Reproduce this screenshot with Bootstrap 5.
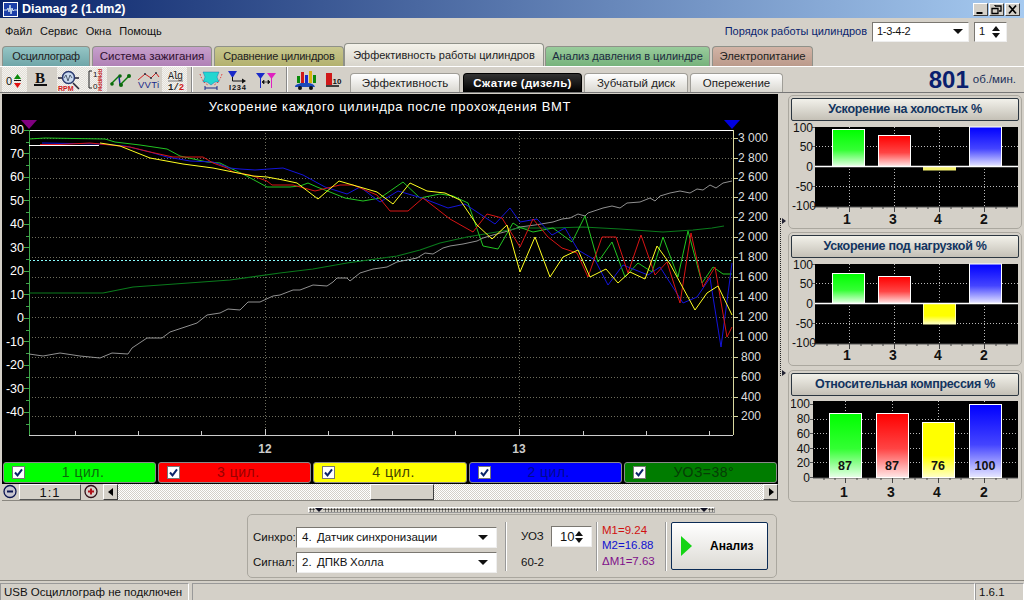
<!DOCTYPE html>
<html lang="ru"><head><meta charset="utf-8"><title>Diamag 2</title>
<link href="https://cdn.jsdelivr.net/npm/bootstrap@5.3.0/dist/css/bootstrap.min.css" rel="stylesheet">
<style>
:root{--w:#d4d0c8;--navy:#0a1f6e}
html,body{margin:0;width:1024px;height:600px;overflow:hidden}
body{background:var(--w);font:11px/1.2 "Liberation Sans",Arial,sans-serif;color:#111;white-space:nowrap}
.app{width:1024px;height:600px}
.ttl{height:18px;background:linear-gradient(90deg,#0a246a,#a6caf0);color:#fff;font-weight:700;font-size:12.5px;padding-left:3px}
.wbtn{width:15px;height:13px;background:var(--w);border:1px solid;border-color:#fff #404040 #404040 #fff;margin-left:1px;display:block}
.mrow{height:25px;padding:3px 17px 1px 5px}
.mitem{margin-right:8px}
.ordr{color:var(--navy);margin-right:5px}
.combo{background:#fff;border:1px solid #8d8a84;border-color:#7a7771 #eee #eee #7a7771;padding:0 5px 0 4px;color:#111}
.combo.c1{width:97px;height:20px;letter-spacing:-.3px}
.tri{width:0;height:0;border-left:5px solid transparent;border-right:5px solid transparent;border-top:5px solid #111}
.spin{width:33px;height:20px;margin-left:5px}
.spn{width:10px;gap:2px}
.tup{width:0;height:0;border-left:4px solid transparent;border-right:4px solid transparent;border-bottom:5px solid #111}
.tdn{width:0;height:0;border-left:4px solid transparent;border-right:4px solid transparent;border-top:5px solid #111}
.trow{height:23px;padding-left:2px;align-items:flex-end;font-size:11px}
.tb{height:20px;border:1px solid #8f9189;border-bottom:0;border-radius:4px 4px 0 0;text-align:center;line-height:19px;color:#222;margin-right:2px;flex:none}
.t1{width:88px;background:linear-gradient(#95c5c5,#6fa6a8);letter-spacing:-.3px}
.t2{width:120px;background:linear-gradient(#c7a0cc,#b081b6);color:#301030;font-size:11.5px}
.t3{width:130px;background:linear-gradient(#c8c78e,#b3b16e);margin-right:0;letter-spacing:-.2px}
.t4{width:200px;height:23px;background:linear-gradient(#f4f2ea,#d8d5cc);line-height:22px;margin-right:1px}
.t5{width:165px;background:linear-gradient(#99cc9c,#77b37c);color:#1c2a40}
.t6{width:101px;background:linear-gradient(#d2b4a6,#bb9a8b);font-size:11.3px}
.tool{height:27px;border-top:1px solid #fff;border-bottom:1px solid #777;padding-left:2px}
.ic{display:block;flex:none}
.ic.on{background:repeating-conic-gradient(#f4f2ee 0 25%,#e2dfd8 0 50%) 0 0/2px 2px}
.vs{width:2px;height:25px;border-left:1px solid #888;border-right:1px solid #fff;flex:none}
.stabs{margin-left:6px;padding-top:6px;align-self:stretch;align-items:flex-end;font-size:11.5px}
.st{height:19px;border:1px solid #a09e98;border-bottom:0;border-radius:4px 4px 0 0;background:linear-gradient(#fff,#d9d7d0);text-align:center;line-height:19px;color:#222;margin-right:2px}
.st.s1{width:110px;margin-right:3px}.st.s2{width:119px;background:linear-gradient(#333,#000);color:#fff;font-weight:700;border-color:#000;letter-spacing:.3px}.st.s3{width:104px}.st.s4{width:93px}
.rpmv{margin-left:auto;color:var(--navy);padding-right:8px;padding-top:1px}
.rpmv b{font-size:24px;line-height:24px}
.rpmv span{margin-left:4px;color:#20305a;font-size:11.5px}
.mainr{height:487px;padding-left:2px}
.lcol{width:776px}
.plot{display:block;background:#000;margin-top:1px}
.plot text,.bars text{font-family:"Liberation Sans",sans-serif}
.legs{height:23px;background:#000;padding:1px;gap:2px}
.lg{height:21px;border-radius:3px;border:1px solid #8a8a8a;padding-left:8px;flex:1 1 0;font-size:14px;letter-spacing:.5px}
.chk{width:13px;height:13px;background:#fff;border:1px solid #777;display:block;flex:none}
.chk svg{display:block}
.lt{flex:1;text-align:center;padding-right:14px}
.lgg{background:#0f0;color:#0a6d0a}.lgr{background:#f00;color:#900}.lgy{background:#ff0;color:#444400}.lgb{background:#00f;color:#000a90}.lgd{background:#007c00;color:#063d06}
.scr{height:17px;border-bottom:1px solid #8a8780}
.zb{width:16px;flex:none}
.zlab{width:62px;margin:0 2px 0 1px;border:1px solid;border-color:#fff #555 #555 #fff;text-align:center;font-size:13px;letter-spacing:1px;line-height:16px;flex:none}
.sbtn{width:15px;border:1px solid;border-color:#fff #404040 #404040 #fff;flex:none}
.trk{background:repeating-conic-gradient(#fff 0 25%,#d4d0c8 0 50%) 0 0/2px 2px}
.thumb{width:64px;margin-left:252px;background:var(--w);border:1px solid;border-color:#fff #404040 #404040 #fff}
.hsp{height:6px;width:407px;margin:6px 0 1px 306px;padding:0 6px;border:1px solid;border-color:#fff #999 #999 #fff;background:radial-gradient(#333 45%,transparent 50%) 0 0/3px 3px}
.hsp i{width:0;height:0;border-left:4px solid transparent;border-right:4px solid transparent;border-top:4px solid #112;background:var(--w)}
.gb{border:1px solid #aaa79f;border-radius:5px;background:var(--w)}
.gb1{width:530px;height:64px;margin-left:245px;padding:0 0 0 5px}
.lbl{width:43px;font-size:11.5px}
.combo.c2{width:201px;height:21px;font-size:11.5px;padding-left:5px;padding-right:8px;word-spacing:-.5px}
.sep{width:2px;height:49px;border-left:1px solid #999;border-right:1px solid #fff;flex:none}
.uoz{width:85px;padding-left:14px;gap:9px;font-size:11.5px}
.spin2{width:41px;height:21px;font-size:13px;padding-left:8px;padding-right:8px}
.vals{width:67px;padding-left:4px;font-size:11.5px;line-height:15.5px}
.anl{width:97px;height:48px;margin-left:4px;background:linear-gradient(#fff,#dcdad4);border:1px solid #0b2b55;border-radius:2px;padding:0 0 0 9px;font-weight:700;font-size:12px;color:#000}
.play{width:0;height:0;border-left:11px solid #14d414;border-top:10px solid transparent;border-bottom:10px solid transparent;margin-right:18px}
.vsp{width:6px;margin:125px 2px 0 2px;height:158px;border-left:1px dotted #222;position:relative;flex:none}
.ar{display:block;width:0;height:0;border-left:4px solid #223;border-top:3px solid transparent;border-bottom:3px solid transparent;margin-left:1px}
.rcol{width:234px;padding-top:2px;gap:2px}
.gp{padding:2px 2px 0;width:234px}
.gh{height:23px;background:linear-gradient(#f2f1ea,#c4c0b6);border:1px solid #2b3640;border-radius:2px;text-align:center;color:#12345f;font-weight:700;line-height:21px;font-size:12.5px;letter-spacing:-.3px}
.g1{height:134px}.g2{height:134px;margin-top:1px}.g3{height:132px;margin-top:2px}
.bars{display:block}
.stat{height:20px;border-top:1px solid #8a8780;padding-top:2px}
.sp{border:1px solid;border-color:#999 #fff #fff #999;height:18px;line-height:16px;padding-left:3px;font-size:11.5px;flex:none}
.sp1{width:189px}.sp2{width:783px;margin-left:3px}.sp3{width:49px}
.cr{color:#d01010}.cb{color:#1010d0}.cp{color:#80108a}
</style></head><body>
<svg width="0" height="0" class="position-absolute"><defs>
<linearGradient id="gg" x1="0" y1="0" x2="0" y2="1"><stop offset="0" stop-color="#0f0"/><stop offset=".55" stop-color="#3f3"/><stop offset="1" stop-color="#e8ffe8"/></linearGradient>
<linearGradient id="gr" x1="0" y1="0" x2="0" y2="1"><stop offset="0" stop-color="#f00"/><stop offset=".55" stop-color="#f44"/><stop offset="1" stop-color="#ffe8e8"/></linearGradient>
<linearGradient id="gy" x1="0" y1="0" x2="0" y2="1"><stop offset="0" stop-color="#ff0"/><stop offset=".6" stop-color="#ff0"/><stop offset="1" stop-color="#ffffc8"/></linearGradient>
<linearGradient id="gb" x1="0" y1="0" x2="0" y2="1"><stop offset="0" stop-color="#00f"/><stop offset=".55" stop-color="#44f"/><stop offset="1" stop-color="#e8e8ff"/></linearGradient>
<symbol id="ck" viewBox="0 0 11 11"><path d="M2 5.500l2.500 2.800 4.500-6" fill="none" stroke="#0a246a" stroke-width="2"/></symbol>
</defs></svg>
<div class="app d-flex flex-column">
<div class="ttl d-flex align-items-center">
<svg width="15" height="15" viewBox="0 0 15 15" class="me-1"><rect x=".5" y=".5" width="14" height="14" fill="#1c3fa8" stroke="#fff"/><path d="M1 8h3l1-2 1 4 1-7 1 9 1-6 1 3 1-1h3" fill="none" stroke="#cde"/></svg>
<span>Diamag 2 (1.dm2)</span>
<div class="ms-auto d-flex me-1">
<svg class="wbtn" viewBox="0 0 13 11"><path d="M2.500 9h6" stroke="#000" stroke-width="2"/></svg>
<svg class="wbtn" viewBox="0 0 13 11"><path d="M5 2h6v5H9M2 4.500h6v5H2zM5 1v1" fill="none" stroke="#000" stroke-width="1.300"/></svg>
<svg class="wbtn" viewBox="0 0 13 11"><path d="M3 1.500l7 8M10 1.500l-7 8" stroke="#000" stroke-width="1.800"/></svg></div>
</div>
<div class="mrow d-flex align-items-center">
<span class="mitem">Файл</span><span class="mitem">Сервис</span><span class="mitem">Окна</span><span class="mitem">Помощь</span>
<span class="ordr ms-auto">Порядок работы цилиндров</span>
<div class="combo c1 d-flex align-items-center justify-content-between">1-3-4-2<i class="tri"></i></div>
<div class="combo spin d-flex align-items-center justify-content-between">1<div class="spn d-flex flex-column align-items-center"><i class="tup"></i><i class="tdn"></i></div></div>
</div>
<div class="trow d-flex">
<div class="tb t1">Осциллограф</div><div class="tb t2">Система зажигания</div><div class="tb t3">Сравнение цилиндров</div><div class="tb t4">Эффективность работы цилиндров</div><div class="tb t5">Анализ давления в цилиндре</div><div class="tb t6">Электропитание</div>
</div>
<div class="tool d-flex align-items-start">
<svg class="ic on" width="25" height="25" viewBox="0 0 25 25"><text x="4" y="18" font-size="11" font-family="Liberation Sans" fill="#111">0</text><path d="M15.500 7l-3.500 5h7z" fill="#0a8a0a"/><path d="M12 13.500h7" stroke="#111"/><path d="M15.500 21l-3.500-5h7z" fill="#e01010"/></svg>
<svg class="ic" width="30" height="25" viewBox="0 0 30 25"><text x="13" y="15.500" font-size="15" font-weight="700" font-family="Liberation Serif" text-anchor="middle" fill="#111">B</text><rect x="7" y="17" width="13" height="2" fill="#111"/></svg>
<svg class="ic on" width="25" height="25" viewBox="0 0 25 25"><path d="M1 11h6M16 11h6M16 16l6 6" stroke="#223" stroke-width="1.500"/><circle cx="11.500" cy="10.500" r="6" fill="#c9d9ee" stroke="#2a3a70" stroke-width="1.500"/><path d="M7 11l2-3 2 6 2-6 2 3" fill="none" stroke="#345" stroke-width=".8"/><text x="1" y="24" font-size="7" font-weight="700" fill="#d01818" font-family="Liberation Sans">RPM</text></svg>
<svg class="ic on" width="25" height="25" viewBox="0 0 25 25"><path d="M10 4H7V21H10" fill="none" stroke="#222"/><text x="11" y="10" font-size="8" font-family="Liberation Sans" fill="#111">1</text><text x="11" y="22" font-size="8" font-family="Liberation Sans" fill="#111">0</text><text transform="translate(16 2) rotate(90)" font-size="5" font-weight="700" fill="#c21818" font-family="Liberation Sans">RPM</text><text transform="translate(16 13) rotate(90)" font-size="5" font-weight="700" fill="#c21818" font-family="Liberation Sans">RPM</text></svg>
<svg class="ic" width="27" height="25" viewBox="0 0 27 25"><path d="M4 17l8-8" stroke="#0a7a0a" stroke-width="1.500"/><path d="M12 9l1 9" stroke="#1a2a9a" stroke-width="1.500"/><path d="M13 18l9-9" stroke="#0a7a0a" stroke-width="1.500"/><circle cx="5" cy="17" r="1.800" fill="#0a6a0a"/><circle cx="13" cy="9" r="1.800" fill="#0a6a0a"/><circle cx="14" cy="18" r="2" fill="#0a6a0a"/><circle cx="22" cy="9" r="2" fill="#0a6a0a"/></svg>
<svg class="ic" width="28" height="25" viewBox="0 0 28 25"><path d="M4 13l7-6 6 4 5-5 3 4" fill="none" stroke="#d01c1c"/><circle cx="11" cy="7" r="1" fill="#234"/><circle cx="17" cy="11" r="1" fill="#234"/><circle cx="22" cy="6" r="1" fill="#234"/><text x="4" y="21" font-size="9.500" font-family="Liberation Sans" fill="#1a2a8a" textLength="21">VVTi</text></svg>
<svg class="ic on" width="25" height="25" viewBox="0 0 25 25"><text x="6" y="12" font-size="10" font-family="Liberation Mono" fill="#222" textLength="15">Alg</text><path d="M6 14h15" stroke="#777"/><text x="6" y="23" font-size="9" font-weight="700" font-family="Liberation Mono" fill="#222">1/<tspan fill="#d01818">2</tspan></text></svg>
<div class="vs mx-1"></div>
<svg class="ic" width="29" height="25" viewBox="0 0 29 25"><path d="M6 5h16l-2 5 2 5h-4l-4 3-4-3H6l2-5z" fill="#23d6d0" stroke="#15a" stroke-width=".4"/><path d="M3 7c2 6 4 9 8 11M25 7c-2 6-4 9-8 11" fill="none" stroke="#d22" stroke-width=".8" stroke-dasharray="1.500 1.500"/><path d="M8 21h12M8 19v4M20 19v4" stroke="#1a2a8a"/></svg>
<svg class="ic" width="26" height="25" viewBox="0 0 26 25"><path d="M2 4h9l-4.500 7z" fill="#1a2ac8"/><path d="M6.500 10v4h12" fill="none" stroke="#111"/><path d="M20 14l-4-2.500v5z" fill="#111"/><text x="3" y="23" font-size="7.500" font-weight="700" font-family="Liberation Sans" fill="#111" textLength="17">I234</text></svg>
<svg class="ic" width="30" height="25" viewBox="0 0 30 25"><path d="M4 6h9l-4.500 6z" fill="#1a2ac8"/><path d="M8.500 11v10" stroke="#1a2ac8"/><path d="M15 6h9l-4.500 6z" fill="#e020c0"/><path d="M19.500 11v10" stroke="#e020c0"/><path d="M10 15h8M10 15l2-2v4zM18 15l-2-2v4z" fill="#111" stroke="#111" stroke-width=".7"/></svg>
<div class="vs mx-1"></div>
<svg class="ic" width="28" height="25" viewBox="0 0 28 25"><rect x="5" y="9" width="3" height="7" fill="#0a8a0a"/><rect x="9" y="5" width="3" height="11" fill="#d01818"/><rect x="13" y="8" width="3" height="8" fill="#1a2ac8"/><rect x="17" y="4" width="3" height="12" fill="#d8b010"/><rect x="21" y="8" width="3" height="8" fill="#0a8a0a"/><path d="M3 20c0-3 4-3 6-4h7c3 0 6 1 7 4z" fill="#1a48b8"/><circle cx="8" cy="21" r="2" fill="#111"/><circle cx="19" cy="21" r="2" fill="#111"/></svg>
<svg class="ic" width="24" height="25" viewBox="0 0 24 25"><rect x="6" y="6" width="6" height="12" fill="#d01818"/><path d="M6 19h13" stroke="#111" stroke-width="1.500"/><text x="12.500" y="17" font-size="8" font-weight="700" font-family="Liberation Sans" fill="#111">10</text></svg>
<div class="stabs d-flex">
<div class="st s1">Эффективность</div><div class="st s2">Сжатие (дизель)</div><div class="st s3">Зубчатый диск</div><div class="st s4">Опережение</div>
</div>
<div class="rpmv d-flex align-items-center"><b>801</b><span>об./мин.</span></div>
</div>
<div class="mainr d-flex">
<div class="lcol d-flex flex-column">
<svg class="plot" width="776" height="367" viewBox="2 94 776 367">
<text x="390" y="111" fill="#fff" font-size="13" text-anchor="middle" letter-spacing=".65">Ускорение каждого цилиндра после прохождения ВМТ</text>
<path d="M29 138.500H733M29 158.500H733M29 178.500H733M29 197.500H733M29 217.500H733M29 237.500H733M29 257.500H733M29 277.500H733M29 297.500H733M29 317.500H733M29 337.500H733M29 357.500H733M29 377.500H733M29 397.500H733M29 416.500H733M265.500 130V435M519.500 130V435" stroke="#6e6e5e" stroke-dasharray="1 2" fill="none"/>
<path d="M29 260.500H733" stroke="#8ff" stroke-dasharray="2 2"/>
<path d="M29 130.500H733" stroke="#fff"/>
<path d="M29 435.500H733" stroke="#ccc"/>
<path d="M29.500 130V435M24 130.500h5M24 153.500h5M24 177.500h5M24 200.500h5M24 224.500h5M24 247.500h5M24 271.500h5M24 294.500h5M24 318.500h5M24 341.500h5M24 365.500h5M24 388.500h5M24 412.500h5M26 142.500h3M26 165.500h3M26 189.500h3M26 212.500h3M26 236.500h3M26 259.500h3M26 283.500h3M26 306.500h3M26 330.500h3M26 353.500h3M26 377.500h3M26 400.500h3M26 424.500h3" stroke="#3fa84a" fill="none"/>
<path d="M733.500 130V435M733 138.500h5M733 158.500h5M733 178.500h5M733 197.500h5M733 217.500h5M733 237.500h5M733 257.500h5M733 277.500h5M733 297.500h5M733 317.500h5M733 337.500h5M733 357.500h5M733 377.500h5M733 397.500h5M733 416.500h5" stroke="#d8d8a0" fill="none"/>
<path d="M75.500 431V435M138.500 431V435M201.500 431V435M265.500 429V435M328.500 431V435M392.500 431V435M455.500 431V435M519.500 429V435M583.500 431V435M646.500 431V435M709.500 431V435" stroke="#ccc"/>
<g fill="#fff" font-size="12.500" text-anchor="end"><text x="24" y="134">80</text><text x="24" y="157.500">70</text><text x="24" y="181">60</text><text x="24" y="204.500">50</text><text x="24" y="228">40</text><text x="24" y="251.500">30</text><text x="24" y="275">20</text><text x="24" y="298.500">10</text><text x="24" y="322">0</text><text x="24" y="345.500">-10</text><text x="24" y="369">-20</text><text x="24" y="392.500">-30</text><text x="24" y="416">-40</text></g>
<g fill="#ddd" font-size="12"><text x="738" y="142">3 000</text><text x="738" y="162">2 800</text><text x="738" y="181">2 600</text><text x="738" y="201">2 400</text><text x="738" y="221">2 200</text><text x="738" y="241">2 000</text><text x="738" y="261">1 800</text><text x="738" y="281">1 600</text><text x="738" y="301">1 400</text><text x="738" y="321">1 200</text><text x="738" y="341">1 000</text><text x="741" y="361">800</text><text x="741" y="381">600</text><text x="741" y="401">400</text><text x="741" y="420">200</text></g>
<g fill="#ccc" font-size="12" font-weight="700" text-anchor="middle"><text x="265" y="453">12</text><text x="519" y="453">13</text></g>
<path d="M21 120h16l-8 9z" fill="#800080"/><path d="M724 120h16l-8 9z" fill="#0000e0"/>
<g fill="none" stroke-width="1" stroke-linejoin="round">
<path stroke="#a0a0a0" stroke-width=".9" d="M29 354L43 356L60 353L80 356L100 358L112 353L128 354L132 348L147 338L162 338L170 332L197 323L207 315L220 313L228 309L240 310L248 302L260 302L273 296L280 295L293 290L300 290L313 285L327 286L333 282L337 278L347 278L350 281L360 273L373 269L387 267L397 262L417 258L425 253L433 254L443 248L450 246L463 244L477 241L483 238L493 235L508 231L520 227L535 225L553 222L562 219L570 218L578 214L585 216L588 213L603 208L612 206L620 208L627 203L640 202L650 198L655 201L660 196L670 193L680 191L690 193L697 189L703 190L710 185L716 188L723 183L732 181"/>
<path stroke="#0a7a1c" stroke-width="1.100" d="M29 293L103 293L133 287L230 280L280 273L313 269L347 263L397 256L420 250L440 243L467 237L520 228L553 228L583 227L620 229L663 232L693 230L712 228L724 226"/>
<path stroke="#fff" d="M29 145.500H99"/>
<path stroke="#22c422" d="M29 139L45 138L105 139L115 142L140 145L167 149L180 156L207 162L220 163L230 168L243 174L267 187L290 187L300 186L308 183L317 187L330 192L345 198L363 201L380 198L403 182L420 198L440 194L453 196L468 203L483 246L498 249L513 223L519 227L533 232L553 228L572 242L585 216L598 262L612 242L625 277L638 263L652 272L663 237L678 277L688 231L702 283L713 267L723 274L732 274"/>
<path stroke="#1414dc" d="M42 143L100 144L125 146L150 152L167 157L190 161L213 162L230 168L240 169L255 170L283 168L303 175L325 187L347 194L360 187L380 202L398 191L422 198L448 208L465 204L495 224L510 208L520 222L537 219L552 235L565 228L578 250L595 260L608 285L623 265L648 275L660 267L683 303L697 297L710 278L721 347L732 263"/>
<path stroke="#d81414" d="M40 144.500L60 144.500L90 143L130 147L150 152L173 157L193 157L203 157L213 163L227 168L233 172L250 175L267 181L272 185L293 185L315 191L340 185L353 185L377 195L390 211L408 211L423 198L450 219L473 232L487 214L502 218L520 247L533 219L548 237L562 248L577 253L588 277L602 237L616 237L628 273L641 235L655 275L667 262L680 303L691 233L703 287L715 267L727 337L732 327"/>
<path stroke="#ffff20" d="M100 143L120 146L150 158L183 164L213 168L233 172L253 176L267 177L283 180L297 183L318 199L339 181L377 192L393 204L410 183L427 191L445 193L460 200L477 225L492 239L507 225L520 272L535 237L550 277L563 257L578 250L590 277L606 269L618 283L630 272L645 279L657 246L670 264L695 310L707 293L718 286L732 315"/>
</g>
</svg>
<div class="legs d-flex">
<div class="lg lgg d-flex align-items-center"><span class="chk"><svg width="11" height="11"><use href="#ck"/></svg></span><span class="lt">1 цил.</span></div>
<div class="lg lgr d-flex align-items-center"><span class="chk"><svg width="11" height="11"><use href="#ck"/></svg></span><span class="lt">3 цил.</span></div>
<div class="lg lgy d-flex align-items-center"><span class="chk"><svg width="11" height="11"><use href="#ck"/></svg></span><span class="lt">4 цил.</span></div>
<div class="lg lgb d-flex align-items-center"><span class="chk"><svg width="11" height="11"><use href="#ck"/></svg></span><span class="lt">2 цил.</span></div>
<div class="lg lgd d-flex align-items-center"><span class="chk"><svg width="11" height="11"><use href="#ck"/></svg></span><span class="lt">УОЗ=38°</span></div>
</div>
<div class="scr d-flex">
<svg class="zb" height="16" viewBox="0 0 16 16"><circle cx="8" cy="7.500" r="6" fill="#c8c6d0" stroke="#0a1450" stroke-width="1.300"/><path d="M5 7.500h6" stroke="#0a1450" stroke-width="2"/></svg>
<div class="zlab">1:1</div>
<svg class="zb" height="16" viewBox="0 0 16 16"><circle cx="8" cy="7.500" r="6" fill="#d8d0cc" stroke="#301018" stroke-width="1.300"/><path d="M5 7.500h6M8 4.500v6" stroke="#b01018" stroke-width="2"/></svg>
<div class="sbtn ms-1 d-flex align-items-center justify-content-center"><svg width="6" height="8"><path d="M5 0v8L0 4z" fill="#000"/></svg></div>
<div class="trk flex-grow-1 d-flex"><div class="thumb"></div></div>
<div class="sbtn d-flex align-items-center justify-content-center"><svg width="6" height="8"><path d="M1 0v8l5-4z" fill="#000"/></svg></div>
</div>
<div class="hsp d-flex justify-content-between"><i></i><i></i></div>
<div class="gb gb1 d-flex align-items-center">
<div class="d-flex flex-column gap-1 pt-2">
<div class="d-flex align-items-center"><span class="lbl">Синхро:</span><div class="combo c2 d-flex align-items-center justify-content-between">4.&nbsp; Датчик синхронизации<i class="tri"></i></div></div>
<div class="d-flex align-items-center"><span class="lbl">Сигнал:</span><div class="combo c2 d-flex align-items-center justify-content-between">2.&nbsp; ДПКВ Холла<i class="tri"></i></div></div>
</div>
<div class="sep ms-2"></div>
<div class="uoz d-flex flex-column pt-2">
<div class="d-flex align-items-center justify-content-between"><span>УОЗ</span><div class="combo spin2 d-flex align-items-center justify-content-between">10<div class="spn d-flex flex-column align-items-center"><i class="tup"></i><i class="tdn"></i></div></div></div>
<div class="pb-1">60-2</div>
</div>
<div class="sep ms-1"></div>
<div class="vals d-flex flex-column"><span class="cr">M1=9.24</span><span class="cb">M2=16.88</span><span class="cp">ΔM1=7.63</span></div>
<div class="sep"></div>
<button class="btn anl d-flex align-items-center"><i class="play"></i>Анализ</button>
</div>
</div>
<div class="vsp"><i class="ar"></i><i class="ar position-absolute bottom-0"></i></div>
<div class="rcol d-flex flex-column">
<div class="gb gp g1"><div class="gh">Ускорение на холостых %</div>
<svg class="bars" width="230" height="106" viewBox="790 121 230 106">
<rect x="814" y="127" width="203" height="80" fill="#000"/>
<path d="M815 146.500H1017M815 186.500H1017M848.500 127V207M893.500 127V207M938.500 127V207M983.500 127V207" stroke="#bbb" stroke-dasharray="1 2"/>
<path d="M811 127.500h3M811 146.500h3M811 186.500h3M811 206.500h3M814 207h203" stroke="#555"/><path d="M848.500 207v5M893.500 207v5M938.500 207v5M983.500 207v5M826 207v2M837 207v2M860 207v2M871 207v2M882 207v2M905 207v2M916 207v2M927 207v2M950 207v2M961 207v2M972 207v2M995 207v2M1006 207v2" stroke="#444"/>
<rect x="831.500" y="129.500" width="32" height="37" fill="url(#gg)" stroke="#fff"/><rect x="877.500" y="135.500" width="32" height="31" fill="url(#gr)" stroke="#fff"/><rect x="922" y="167" width="33" height="3.500" fill="#f4f070"/><rect x="968.500" y="127" width="32" height="39.500" fill="url(#gb)" stroke="#fff"/>
<path d="M814 166.500H1017" stroke="#fff" stroke-width="1.300"/>
<g font-size="12" fill="#111" text-anchor="end"><text x="812" y="132">100</text><text x="812" y="151">50</text><text x="812" y="171">0</text><text x="812" y="191">-50</text><text x="815" y="210">-100</text></g>
<g font-size="14" font-weight="700" fill="#111" text-anchor="middle"><text x="846" y="224">1</text><text x="892" y="224">3</text><text x="937" y="224">4</text><text x="983" y="224">2</text></g>
</svg></div>
<div class="gb gp g2"><div class="gh">Ускорение под нагрузкой %</div>
<svg class="bars" width="230" height="106" viewBox="790 257 230 106">
<rect x="814" y="263" width="203" height="80" fill="#000"/>
<path d="M815 282.500H1017M815 322.500H1017M848.500 263V343M893.500 263V343M938.500 263V343M983.500 263V343" stroke="#bbb" stroke-dasharray="1 2"/>
<path d="M811 263.500h3M811 282.500h3M811 322.500h3M811 342.500h3M814 343h203" stroke="#555"/><path d="M848.500 343v5M893.500 343v5M938.500 343v5M983.500 343v5M826 343v2M837 343v2M860 343v2M871 343v2M882 343v2M905 343v2M916 343v2M927 343v2M950 343v2M961 343v2M972 343v2M995 343v2M1006 343v2" stroke="#444"/>
<rect x="831.500" y="272.500" width="32" height="30" fill="url(#gg)" stroke="#fff"/><rect x="877.500" y="275.500" width="32" height="27" fill="url(#gr)" stroke="#fff"/><rect x="922.500" y="302.500" width="32" height="20.500" fill="url(#gy)" stroke="#ffffb0"/><rect x="968.500" y="263" width="32" height="39.500" fill="url(#gb)" stroke="#fff"/>
<path d="M814 302.500H1017" stroke="#fff" stroke-width="1.300"/>
<g font-size="12" fill="#111" text-anchor="end"><text x="812" y="268">100</text><text x="812" y="287">50</text><text x="812" y="307">0</text><text x="812" y="327">-50</text><text x="815" y="346">-100</text></g>
<g font-size="14" font-weight="700" fill="#111" text-anchor="middle"><text x="846" y="359">1</text><text x="892" y="359">3</text><text x="937" y="359">4</text><text x="983" y="359">2</text></g>
</svg></div>
<div class="gb gp g3"><div class="gh">Относительная компрессия %</div>
<svg class="bars" width="230" height="104" viewBox="790 394 230 104">
<rect x="812" y="399" width="205" height="77" fill="#000"/>
<path d="M813 417.500H1017M813 431.500H1017M813 446.500H1017M813 460.500H1017M844.500 399V476M891.500 399V476M937.500 399V476M983.500 399V476" stroke="#bbb" stroke-dasharray="1 2"/>
<path d="M809 402.500h3M809 417.500h3M809 431.500h3M809 446.500h3M809 460.500h3M809 475.500h3M812 476h205" stroke="#555"/><path d="M844.500 476v5M891.500 476v5M937.500 476v5M983.500 476v5M823 476v2M834 476v2M856 476v2M867 476v2M880 476v2M903 476v2M914 476v2M926 476v2M949 476v2M960 476v2M972 476v2M995 476v2M1006 476v2" stroke="#444"/>
<rect x="828.500" y="411.500" width="32" height="64" fill="url(#gg)" stroke="#fff"/><rect x="875.500" y="411.500" width="32" height="64" fill="url(#gr)" stroke="#fff"/><rect x="921.500" y="420.500" width="32" height="55" fill="url(#gy)" stroke="#fff"/><rect x="968.500" y="402.500" width="32" height="73" fill="url(#gb)" stroke="#fff"/>
<g font-size="12" fill="#111" text-anchor="end"><text x="809" y="406">100</text><text x="809" y="421">80</text><text x="809" y="436">60</text><text x="809" y="451">40</text><text x="809" y="465">20</text><text x="809" y="480">0</text></g>
<g font-size="12.500" font-weight="700" fill="#111" text-anchor="middle"><text x="844" y="468">87</text><text x="891" y="468">87</text><text x="937" y="468">76</text><text x="984" y="468">100</text></g>
<g font-size="14" font-weight="700" fill="#111" text-anchor="middle"><text x="843" y="495">1</text><text x="890" y="495">3</text><text x="936" y="495">4</text><text x="983" y="495">2</text></g>
</svg></div>
</div>
</div>
<div class="stat d-flex">
<div class="sp sp1">USB Осциллограф не подключен</div><div class="sp sp2"></div><div class="sp sp3">1.6.1</div>
</div>
</div>
</body></html>
